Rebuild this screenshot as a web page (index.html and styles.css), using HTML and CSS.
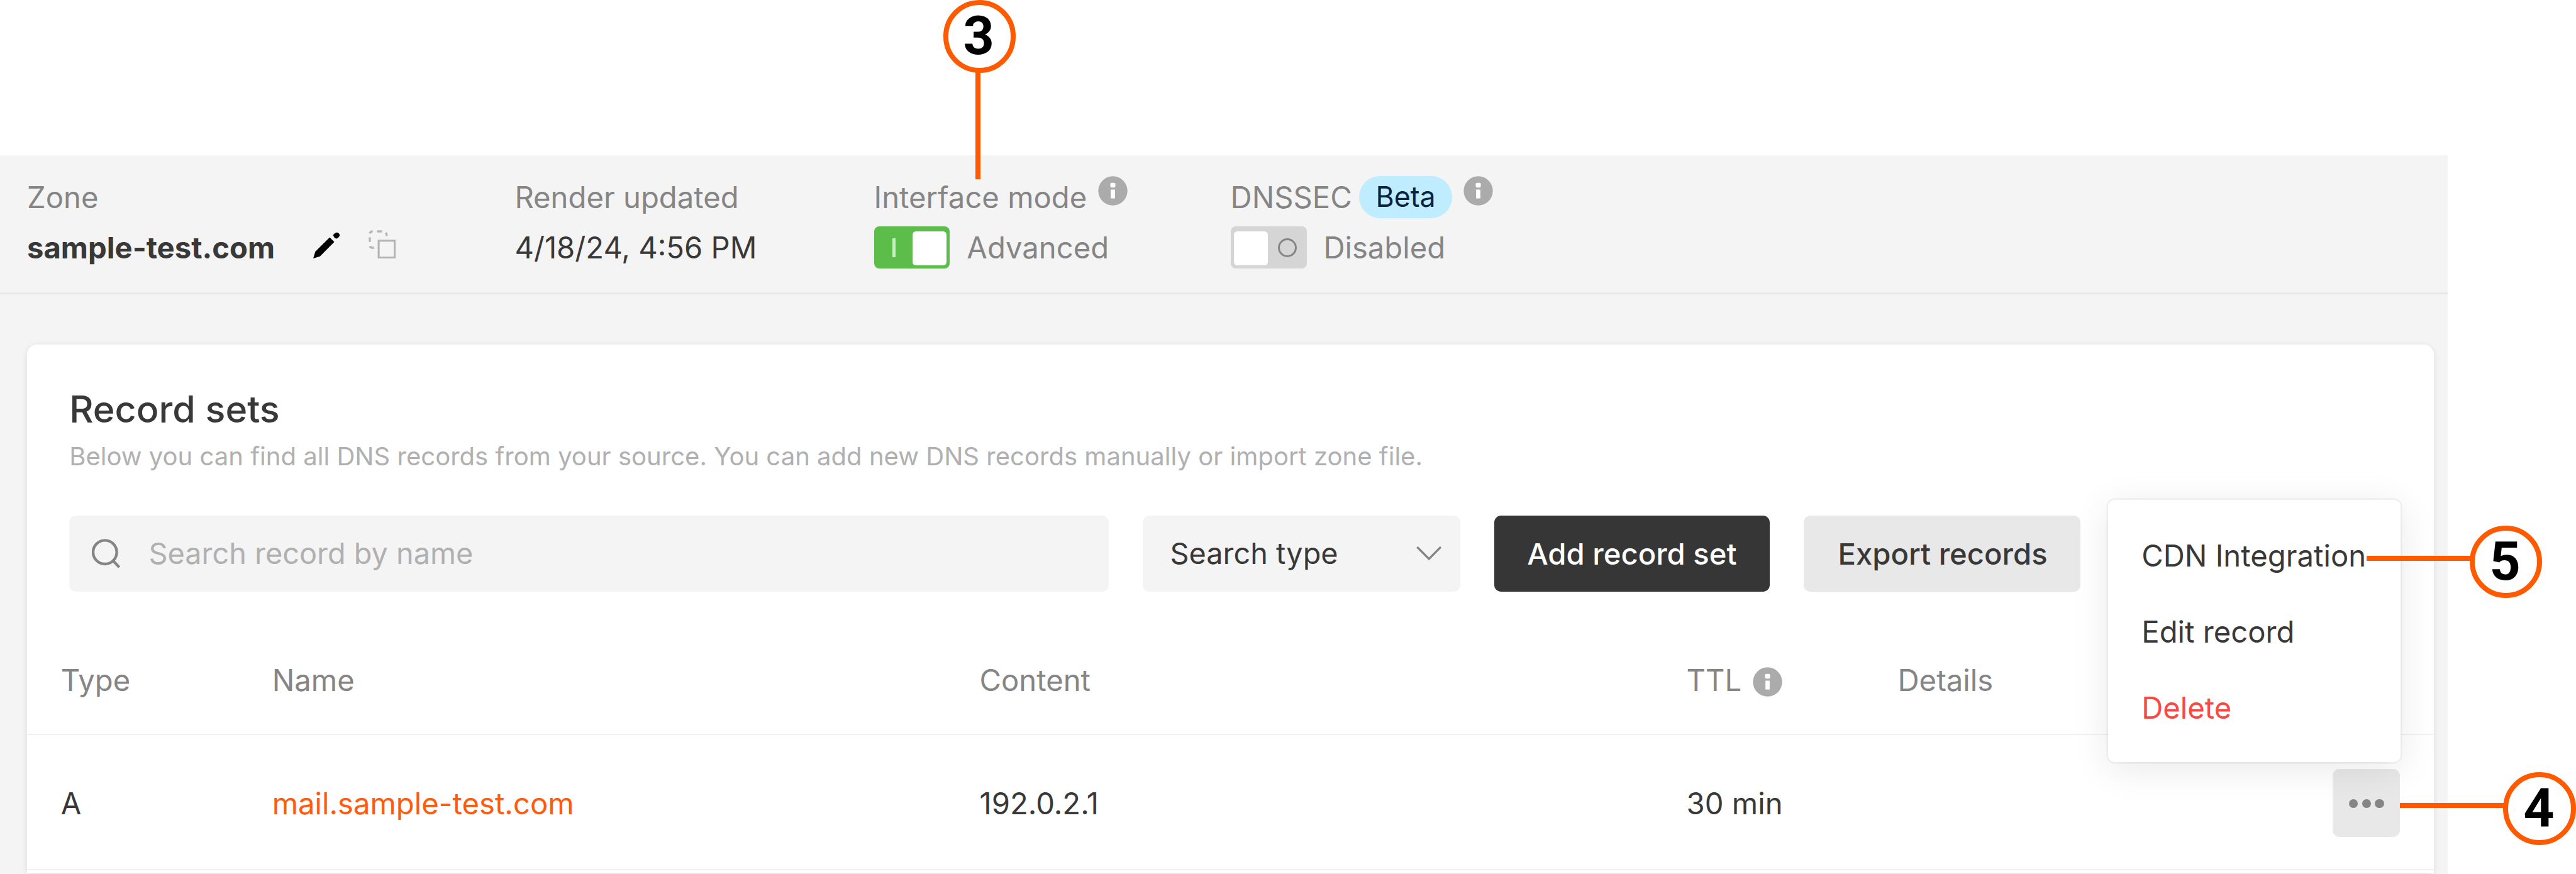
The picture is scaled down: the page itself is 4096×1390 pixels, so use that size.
FILE: index.html
```
<!DOCTYPE html>
<html lang="en">
<head>
<meta charset="utf-8">
<title>DNS zone – Record sets</title>
<link rel="stylesheet" href="styles.css">
</head>
<body>
<svg class="sprite" aria-hidden="true">
  <symbol id="icon-info" viewBox="0 0 70 70">
    <circle cx="35" cy="35" r="34.5" fill="#ababab"/>
    <rect x="29" y="16" width="12" height="11" rx="3" fill="#fff"/>
    <path d="M30 32h10v21H30z" fill="#fff"/>
  </symbol>
</svg>
<main class="panel">
  <header class="zone">
    <div class="field">
      <div class="label">Zone</div>
      <div class="value value-zone">
        <strong>sample-test.com</strong>
        <svg class="icon-edit" viewBox="0 0 64 64"><path d="M0 64L5 48L39 14L50 25L16 59Z"/><path d="M47 9Q54 0 60 4Q67 10 56 17L51 16Z"/></svg>
        <svg class="icon-copy" viewBox="0 0 64 68"><rect x="24" y="25" width="38" height="40" fill="none" stroke="#b2b2b2" stroke-width="4.5"/><path d="M3 8Q4 3 10 3M20 3H32M41 6Q43 9 43 14M3 17V28M3 38Q4 42 13 42" fill="none" stroke="#b6b6b6" stroke-width="5"/></svg>
      </div>
    </div>
    <div class="field">
      <div class="label">Render updated</div>
      <div class="value">4/18/24, 4:56 PM</div>
    </div>
    <div class="field">
      <div class="label label-mode">Interface mode <svg class="info info-raised"><use href="#icon-info"/></svg></div>
      <div class="value value-muted"><span class="switch switch-on"><i class="bar"></i><i class="knob"></i></span>Advanced</div>
    </div>
    <div class="field">
      <div class="label label-dnssec">DNSSEC <span class="badge">Beta</span><svg class="info info-raised"><use href="#icon-info"/></svg></div>
      <div class="value value-muted"><span class="switch"><i class="knob"></i><i class="ring"></i></span>Disabled</div>
    </div>
  </header>

  <section class="card">
    <h1 class="title">Record sets</h1>
    <p class="subtitle">Below you can find all DNS records from your source. You can add new DNS records manually or import zone file.</p>
    <div class="toolbar">
      <div class="search">
        <svg class="icon-search" viewBox="0 0 68 72"><circle cx="31" cy="33" r="28"/><path d="M50 53L65 69"/></svg>
        <span>Search record by name</span>
      </div>
      <div class="select"><span>Search type</span><svg class="icon-chevron" viewBox="0 0 60 36"><path d="M2 3L30 31L58 3"/></svg></div>
      <div class="button button-dark">Add record set</div>
      <div class="button">Export records</div>
    </div>

    <div class="row row-head">
      <span>Type</span><span>Name</span><span>Content</span>
      <span class="ttl">TTL <svg class="info"><use href="#icon-info"/></svg></span><span>Details</span>
    </div>
    <div class="row">
      <span>A</span><span class="link">mail.sample-test.com</span><span>192.0.2.1</span><span>30 min</span><span></span>
      <div class="more"><i></i><i></i><i></i></div>
    </div>

    <div class="menu">
      <div class="menu-item">CDN Integration</div>
      <div class="menu-item">Edit record</div>
      <div class="menu-item menu-danger">Delete</div>
    </div>
  </section>
</main>

<div class="line line-3"></div><div class="callout callout-3">3</div>
<div class="line line-4"></div><div class="callout callout-4">4</div>
<div class="line line-5"></div><div class="callout callout-5">5</div>
</body>
</html>
```
FILE: styles.css
```
html {
  font-size: calc(100vw / 60.96);
}

* {
  box-sizing: border-box;
}

body {
  position: relative;
  margin: 0;
  width: 100vw;
  height: 100vh;
  overflow: hidden;
  background: #fff;
  color: #383838;
  font: 400 0.703rem/1rem Inter, "Liberation Sans", sans-serif;
  white-space: nowrap;
}

.sprite {
  position: absolute;
  width: 0;
  height: 0;
}

.panel {
  width: 57.92rem;
  height: 17rem;
  margin-top: 3.68rem;
  background: #f4f4f4;
}

/* Zone summary */
.zone {
  display: grid;
  grid-template-columns: 11.54rem 8.5rem 8.44rem 1fr;
  height: 3.28rem;
  padding: 0.48rem 0 0 0.64rem;
  border-bottom: 0.05rem solid #e8e8e8;
}

.label,
.value {
  display: flex;
  align-items: center;
  height: 1rem;
}

.label {
  color: #858585;
}

.value {
  margin-top: 0.2rem;
}

.value-muted {
  color: #858585;
}

.value strong {
  font-weight: 700;
}

.icon-edit {
  width: 0.64rem;
  height: 0.64rem;
  margin: 0 0 0.12rem 0.9rem;
}

.icon-copy {
  width: 0.64rem;
  height: 0.68rem;
  margin: 0 0 0.16rem 0.68rem;
}

.info {
  width: 0.7rem;
  height: 0.7rem;
  flex: none;
}

.info-raised {
  margin-bottom: 0.3rem;
}

.label-mode .info {
  margin-left: 0.27rem;
}

.badge {
  width: 2.2rem;
  height: 1rem;
  margin-left: 0.17rem;
  border-radius: 0.5rem;
  background: #bfecff;
  color: #0c2340;
  font-size: 0.665rem;
  text-align: center;
}

.label-dnssec .info {
  margin-left: 0.27rem;
}

.switch {
  display: flex;
  align-items: center;
  width: 1.8rem;
  height: 1rem;
  padding: 0 0.08rem;
  margin-right: 0.4rem;
  border-radius: 0.12rem;
  background: #d5d5d5;
}

.switch-on {
  background: #5dbd4a;
}

.knob {
  width: 0.8rem;
  height: 0.8rem;
  margin-top: 0.04rem;
  border-radius: 0.08rem;
  background: #fff;
}

.bar {
  width: 0.08rem;
  height: 0.44rem;
  margin: 0 0.4rem 0 0.36rem;
  background: rgba(255, 255, 255, 0.7);
}

.ring {
  width: 0.45rem;
  height: 0.45rem;
  margin-left: 0.24rem;
  border: 0.05rem solid #858585;
  border-radius: 50%;
}

/* Record sets card */
.card {
  position: relative;
  width: 56.96rem;
  height: 12.52rem;
  margin: 1.2rem 0 0 0.64rem;
  padding-top: 1.02rem;
  border-radius: 0.24rem 0.24rem 0 0;
  background: #fff;
  box-shadow: 0 0.04rem 0.16rem rgba(0, 0, 0, 0.09);
}

.title {
  margin: 0 0 0 1rem;
  font-size: 0.881rem;
  font-weight: 500;
  line-height: 1rem;
}

.subtitle {
  margin: 0.22rem 0 0 1rem;
  color: #b0b0b0;
  font-size: 0.5965rem;
  line-height: 0.8rem;
}

.toolbar {
  display: flex;
  gap: 0.8rem;
  height: 1.8rem;
  margin: 1rem 0 0 1rem;
}

.search,
.select,
.button {
  display: flex;
  align-items: center;
  border-radius: 0.16rem;
  background: #f4f4f4;
}

.search {
  width: 24.6rem;
  padding-left: 0.53rem;
  color: #b0b0b0;
  font-size: 0.697rem;
}

.icon-search {
  width: 0.68rem;
  height: 0.72rem;
  margin-right: 0.67rem;
  fill: none;
  stroke: #858585;
  stroke-width: 6.5;
}

.select {
  justify-content: space-between;
  width: 7.52rem;
  padding: 0 0.45rem 0 0.65rem;
  font-size: 0.697rem;
}

.icon-chevron {
  width: 0.6rem;
  height: 0.36rem;
  fill: none;
  stroke: #858585;
  stroke-width: 5;
}

.button {
  justify-content: center;
  width: 6.56rem;
  padding-left: 0.03rem;
  background: #e8e8e8;
  font-weight: 500;
}

.button-dark {
  width: 6.52rem;
  padding: 0;
  background: #363636;
  color: #fff;
}

/* Records table */
.row {
  display: grid;
  grid-template-columns: 5rem 16.74rem 16.73rem 5rem 10.29rem 1.6rem;
  align-items: center;
  height: 3.2rem;
  padding-left: 0.8rem;
  border-bottom: 0.04rem solid #f2f2f2;
}

.row > span {
  padding-top: 0.06rem;
}

.row-head {
  height: 2.6rem;
  margin-top: 0.8rem;
  color: #858585;
}

.row-head > span {
  padding: 0.02rem 0 0;
}

.row .ttl {
  display: flex;
  align-items: center;
}

.ttl .info {
  margin: 0.1rem 0 0 0.27rem;
}

.link {
  color: #ff5a0e;
}

.more {
  display: flex;
  align-items: center;
  justify-content: center;
  gap: 0.1rem;
  height: 1.6rem;
  margin-top: 0.04rem;
  border-radius: 0.16rem;
  background: #e8e8e8;
}

.more i {
  width: 0.21rem;
  height: 0.21rem;
  margin-top: 0.04rem;
  border-radius: 50%;
  background: #858585;
}

/* Row actions menu, floating over the table */
.menu {
  position: absolute;
  top: 3.67rem;
  left: 49.24rem;
  width: 6.93rem;
  height: 6.21rem;
  padding: 0.4rem 0.8rem;
  border-radius: 0.16rem;
  background: #fff;
  box-shadow: 0 0 0 0.04rem rgba(0, 0, 0, 0.04), 0 0.16rem 0.9rem rgba(0, 0, 0, 0.09);
}

.menu-item {
  height: 1.8rem;
  line-height: 1.84rem;
}

.menu-danger {
  color: #fb4843;
}

/* Numbered callouts */
.callout {
  position: absolute;
  width: 1.72rem;
  height: 1.72rem;
  padding-right: 0.04rem;
  border: 0.12rem solid #ff5a00;
  border-radius: 50%;
  background: #fff;
  color: #000;
  font: 700 1.28rem/1.46rem Roboto, sans-serif;
  text-align: center;
}

.line {
  position: absolute;
  height: 0.12rem;
  background: #ff5a00;
}

.callout-3 { left: 22.32rem; top: 0; }
.callout-4 { left: 59.24rem; top: 18.28rem; }
.callout-5 { left: 58.44rem; top: 12.44rem; }

.line-3 { left: 23.08rem; top: 1.7rem; width: 0.12rem; height: 2.54rem; }
.line-4 { left: 56.8rem; top: 19rem; width: 2.5rem; }
.line-5 { left: 56rem; top: 13.16rem; width: 2.5rem; }
```
